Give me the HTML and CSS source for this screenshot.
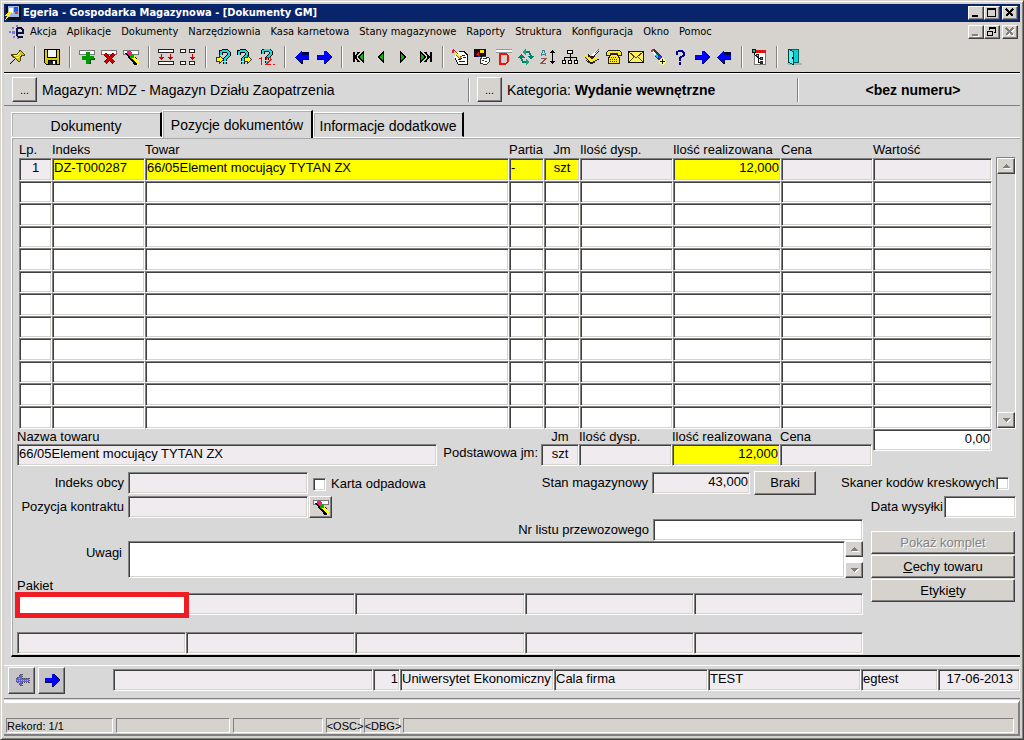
FILE: index.html
```html
<!DOCTYPE html>
<html lang="pl">
<head>
<meta charset="utf-8">
<title>Egeria - Gospodarka Magazynowa - [Dokumenty GM]</title>
<link rel="stylesheet" href="styles.css">
</head>
<body>
<svg class="defs" aria-hidden="true">
  <symbol id="pin" viewBox="0 0 16 16"><path d="M1 15l5-5" stroke="#000" /><path d="M2 6l2-1h4l2-2V1h1l4 4v1h-2l-2 3v3l-1 1-4-4z" fill="#d0c410" stroke="#4a4400"/><path d="M5 6h4l2-3M7 8h3l2-2" stroke="#ffff70" fill="none"/></symbol>
  <symbol id="save" viewBox="0 0 16 16"><path d="M0 0h16v16H2l-2-2z" fill="#000"/><path d="M1 1h2v8h10V1h2v14h-2v-4H4v4H2l-1-1z" fill="#d8cc00"/><path d="M4 1h8v7H4z" fill="#f4f4f4"/><path d="M5 12h7v4H5z" fill="#222"/><path d="M9 12h2v3H9z" fill="#fff"/></symbol>
  <symbol id="plus" viewBox="0 0 16 16"><path d="M.5 1.500h15v4H.5z" fill="#fff" stroke="#777"/><path d="M7 3h4v4h4v4h-4v4H7v-4H3V7h4z" fill="#009a00"/><path d="M10 14h1v-4h4v-1" stroke="#005000" fill="none"/></symbol>
  <symbol id="del" viewBox="0 0 16 16"><path d="M.5 1.500h15v4H.5z" fill="#fff" stroke="#777"/><path d="M4 5l9 9M13 5l-9 9" stroke="#500" stroke-width="4"/><path d="M4 5l9 9M13 5l-9 9" stroke="#d00000" stroke-width="2"/></symbol>
  <symbol id="erase" viewBox="0 0 16 16"><path d="M.5 1.500h15v4H.5z" fill="#fff" stroke="#777"/><path d="M3 4l10 12" stroke="#000" stroke-width="2"/><path d="M5 3l10 12" stroke="#000" stroke-width="5"/><path d="M10 8l6 7" stroke="#ffff20" stroke-width="3"/><path d="M5 2l3 4" stroke="#f02080" stroke-width="4"/><path d="M8 6l2 3" stroke="#00b000" stroke-width="4"/></symbol>
  <symbol id="rowsA" viewBox="0 0 16 16"><path d="M.5.500h15v3H.5zM.5 12.500h15v3H.5z" fill="#fff" stroke="#222"/><path d="M3 5h1v3h2v1H5v1H4v1H3v-1H2V9H1V8h2zM12 5h1v3h2v1h-1v1h-1v1h-1v-1h-1V9h-1V8h2z" fill="#e00000"/></symbol>
  <symbol id="rowsB" viewBox="0 0 16 16"><path d="M.5.500h5v3h-5zM9.500.500h5v3h-5zM.5 12.500h5v3h-5zM9.500 12.500h5v3h-5z" fill="#fff" stroke="#222"/><path d="M12 5h1v3h2v1h-1v1h-1v1h-1v-1h-1V9h-1V8h2z" fill="#e00000"/></symbol>
  <symbol id="hook" viewBox="0 0 16 16"><path d="M6 6V3l2-1h4l2 2v2l-4 4v2M10 13v2" stroke="#000" stroke-width="4" fill="none"/><path d="M6 6V3l2-1h4l2 2v2l-4 4v2M10 13v2" stroke="#20d8e0" stroke-width="2" fill="none"/></symbol>
  <symbol id="qin" viewBox="0 0 16 16"><use href="#hook"/><path d="M1.500 8.500h3v-2l4 4-4 4v-2h-3z" fill="#ff0" stroke="#333"/></symbol>
  <symbol id="qout" viewBox="0 0 16 16"><use href="#hook" x="-4"/><path d="M7.500 8.500h3v-2l4 4-4 4v-2h-3z" fill="#ff0" stroke="#333"/></symbol>
  <symbol id="qnum" viewBox="0 0 16 16"><use href="#hook" x="-2" y="-1"/><path d="M0 9.500h2M2.500 8v8M7 10.500l1-2h3l1 2-5 5h5M14 15.500h2" stroke="#f01010" fill="none"/></symbol>
  <symbol id="right" viewBox="0 0 16 16"><path d="M1 7h7V2h2l6 6-6 7H8v-4H1z" fill="#000040"/><path d="M1 6h7V2h1l6 6-6 6H8v-4H1z" fill="#00f"/></symbol>
  <symbol id="left" viewBox="0 0 16 16"><path d="M15 11H9v4H7L1 8l6-5h8z" fill="#000040"/><path d="M15 6H8V2H7L1 8l6 6h1v-4h7z" fill="#00f"/></symbol>
  <symbol id="leftOff" viewBox="0 0 16 16"><path d="M15 6H8V2H7L1 8l6 6h1v-4h7z" fill="#6464c8" stroke="#505060" stroke-dasharray="1 1"/><path d="M3 8h12M5 6h2M5 10h2" stroke="#a8a8d0" stroke-dasharray="1 1"/></symbol>
  <symbol id="first" viewBox="0 0 16 16"><path d="M2.500 3v10M8 3L4 8l4 5" stroke="#000" fill="none" stroke-width="2"/><path d="M12.500 3v10l-5-5z" fill="#0b0" stroke="#000"/></symbol>
  <symbol id="prev" viewBox="0 0 16 16"><path d="M10.500 3v10l-5-5z" fill="#0b0" stroke="#000"/></symbol>
  <symbol id="next" viewBox="0 0 16 16"><path d="M5.500 3v10l5-5z" fill="#0b0" stroke="#000"/></symbol>
  <symbol id="last" viewBox="0 0 16 16"><path d="M13.500 3v10M8 3l4 5-4 5" stroke="#000" fill="none" stroke-width="2"/><path d="M3.500 3v10l5-5z" fill="#0b0" stroke="#000"/></symbol>
  <symbol id="note" viewBox="0 0 16 16"><path d="M4.500 2.500h7l3 3v9h-9l-3-6z" fill="#fff"/><path d="M7 2.500h5l3 3v9.500H6l-3-6" fill="none" stroke="#111"/><path d="M10 6.500h3M11 8.500h3M6 10.500h3M7 12.500h6" stroke="#222"/><path d="M1 2l8 7" stroke="#806000" stroke-width="3"/><path d="M2 3l6 5" stroke="#ffe850" stroke-width="2"/><path d="M0 1l2 2" stroke="#e01050" stroke-width="3"/><path d="M9 9h1v1H9z" fill="#000"/></symbol>
  <symbol id="shapes" viewBox="0 0 16 16"><path d="M0 0h12v8H0z" fill="#111"/><path d="M1 6h4V2z" fill="#e01010"/><path d="M6 1h4v3H6z" fill="#ffe000"/><path d="M4 6h2v2H4z" fill="#1030e0"/><path d="M6 11l3-4 6 2v4l-3 3-3-1-3-1z" fill="#fff" stroke="#333"/><path d="M9 9.500h4M11 12.500h2M8 11.500h2" stroke="#333"/></symbol>
  <symbol id="dee" viewBox="0 0 16 16"><path d="M0 0h16v4H0z" fill="#fff"/><path d="M0 .500h16M0 3.500h16" stroke="#999"/><path d="M4 4.500h6l2 2v6l-2 2H4z" stroke="#f01010" stroke-width="2" fill="none"/></symbol>
  <symbol id="sync" viewBox="0 0 16 16"><path d="M6 3h5l2 4M10 13H5L3 9" stroke="#008070" stroke-width="2" fill="none"/><path d="M9 7h7l-3 4zM0 9h7L3 5z" fill="#008070"/><path d="M8 0v6L4 3zM8 10v6l4-3z" fill="#20a080"/></symbol>
  <symbol id="sort" viewBox="0 0 16 16"><path d="M1 7l2-6h1l2 6M2 5h3" stroke="#408090" fill="none"/><path d="M1 9.500h5l-5 5h5" stroke="#905050" fill="none"/><path d="M12 1h1v1h1v1h1v1h-2v8h2v1h-1v1h-1v1h-1v-1h-1v-1h-1v-1h2V4h-2V3h1V2h1z" fill="#000"/></symbol>
  <symbol id="tree" viewBox="0 0 16 16"><path d="M8 4v4M2 12V8h12v4M8 8v4" stroke="#000" fill="none"/><path d="M5.500 1.500h5v3h-5zM.5 11.500h3v3h-3zM6.500 11.500h3v3h-3zM12.500 11.500h3v3h-3z" fill="#fff" stroke="#000"/></symbol>
  <symbol id="sign" viewBox="0 0 16 16"><path d="M0 7l5-2 7 4 3 1-8 5z" fill="#ffe820"/><path d="M1 8l6 6 8-4M2 11l5 4 4-2" stroke="#222" fill="none"/><path d="M4 6l4 3 6-7" stroke="#222" stroke-width="2" fill="none"/><path d="M8 7l5-5" stroke="#fff" stroke-width="2"/><path d="M11 4l4-4" stroke="#e020a0"/></symbol>
  <symbol id="phone" viewBox="0 0 16 16"><path d="M2.500 1.500h11l2 2v3h-4v-2h-7v2h-4v-3zM4.500 5.500h7l2 4v5h-11v-5z" fill="#ffe820" stroke="#222"/><path d="M5 8.500h6M4 10.500h8M4 12.500h8" stroke="#333" stroke-dasharray="1 1"/></symbol>
  <symbol id="mail" viewBox="0 0 16 16"><path d="M.5 2.500h15v11H.5z" fill="#fff060" stroke="#111"/><path d="M1 3l7 6 7-6M1 13l5-5M15 13l-5-5" stroke="#554800" fill="none"/></symbol>
  <symbol id="torch" viewBox="0 0 16 16"><path d="M1 1l3-1 8 7 1 3-2 3-3-2-5-7z" fill="#333"/><path d="M1 3l2-2" stroke="#e03040" stroke-width="2"/><path d="M3 2l5 5-2 1-4-4z" fill="#f0f0f0"/><path d="M6 6l3 3" stroke="#20c8d8" stroke-width="2"/><path d="M9 7l2 3" stroke="#2040f0" stroke-width="3"/><path d="M11 9h3v1h1v1h1v3h-1v1h-1v1h-3v-1h-1v-1H9v-3h1v-1h1z" fill="#ffff60"/><path d="M12.500 10v5M10 12.500h5" stroke="#111"/></symbol>
  <symbol id="help" viewBox="0 0 16 16"><path d="M5 6V3l2-1h3l2 2v2L8 9v3M8 13v3" stroke="#000090" stroke-width="2" fill="none"/></symbol>
  <symbol id="struct" viewBox="0 0 16 16"><path d="M3.500 1.500h11v14h-11z" fill="#fff" stroke="#777"/><path d="M5 1h10v3H5z" fill="#e01010"/><path d="M3 2v3l4 4h2M7 6v7h2" stroke="#111" fill="none"/><path d="M1 0h4v4H1z" fill="#111"/><path d="M2 1h2v2H2z" fill="#0cc"/><path d="M5 5h3v3H5zM9 8h3v3H9zM9 12h3v3H9z" fill="#222"/><path d="M6 6h1v1H6z" fill="#ff0"/><path d="M10 9h1v1h-1z" fill="#0f0"/><path d="M10 13h1v1h-1z" fill="#f00"/></symbol>
  <symbol id="door" viewBox="0 0 16 16"><path d="M0 14h16v2H2z" fill="#b0b0b0"/><path d="M2.500.500h10v13h-10z" fill="#10d0d0" stroke="#006060"/><path d="M2.500.500l5 2v13l-5-2z" fill="#60f0f0" stroke="#004040"/><path d="M6 8h1v2H6z" fill="#000"/></symbol>
  <symbol id="app" viewBox="0 0 16 16"><path d="M1 0h13l2 2v13H3l-2-2z" fill="#111"/><path d="M3 1h11v11H3z" fill="#9bb8e8"/><path d="M4 3h4v5H4z" fill="#fff"/><path d="M9 2h4v5H9z" fill="#2858d0"/><path d="M10 6h3v3h-3z" fill="#e03030"/><path d="M3 7L0 11h2l-2 4 6-5H4l3-3z" fill="#ffe820"/></symbol>
  <symbol id="ego" viewBox="0 0 16 16"><g fill="#7878e8"><path d="M0 7h2v2H0zM3 3h2v2H3zM3 7h3v3H3zM4 12h2v2H4zM7 1h2v2H7zM8 13h2v2H8z"/></g><path d="M8 8.500h6V6l-2-2H9L7.500 6v5l2 2H14" fill="none" stroke="#101040" stroke-width="2"/></symbol>
</svg>

<div class="window">
  <header class="titlebar">
    <svg class="ico"><use href="#app"/></svg>
    <h1>Egeria - Gospodarka Magazynowa - [Dokumenty GM]</h1>
    <div class="winbtns">
      <button aria-label="Minimalizuj"><svg viewBox="0 0 12 10"><path d="M2 8h6" stroke="#000" stroke-width="2"/></svg></button>
      <button aria-label="Maksymalizuj"><svg viewBox="0 0 12 10"><path d="M1.500 1v7.500h8V1M1 1h9" fill="none" stroke="#000"/><path d="M1 1h9" stroke="#000" stroke-width="2"/></svg></button>
      <button class="apart" aria-label="Zamknij"><svg viewBox="0 0 12 10"><path d="M2 1l7 7M9 1L2 8" stroke="#000" stroke-width="2"/></svg></button>
    </div>
  </header>

  <nav class="menubar">
    <svg class="ico"><use href="#ego"/></svg>
    <button>Akcja</button><button>Aplikacje</button><button>Dokumenty</button><button>Narzędziownia</button><button>Kasa karnetowa</button><button>Stany magazynowe</button><button>Raporty</button><button>Struktura</button><button>Konfiguracja</button><button>Okno</button><button>Pomoc</button>
    <div class="winbtns">
      <button aria-label="Minimalizuj dokument"><svg viewBox="0 0 12 10"><path d="M3 9h6" stroke="#fff" stroke-width="2"/><path d="M2 8h6" stroke="#808080" stroke-width="2"/></svg></button>
      <button aria-label="Przywróć dokument"><svg viewBox="0 0 12 10"><path d="M3.500 3V.500h6v5H8M3 1h7M1.500 4.500h5v4h-5zM1 4h6" fill="none" stroke="#000"/></svg></button>
      <button class="apart" aria-label="Zamknij dokument" disabled><svg viewBox="0 0 12 10"><path d="M3 2l7 7M10 2L3 9" stroke="#fff" stroke-width="2"/><path d="M2 1l7 7M9 1L2 8" stroke="#808080" stroke-width="2"/></svg></button>
    </div>
  </nav>

  <div class="toolbar" role="toolbar" aria-label="Narzędzia">
    <button aria-label="Przypnij"><svg><use href="#pin"/></svg></button><i></i>
    <button aria-label="Zapisz"><svg><use href="#save"/></svg></button><i></i>
    <button aria-label="Dodaj"><svg><use href="#plus"/></svg></button>
    <button aria-label="Usuń"><svg><use href="#del"/></svg></button>
    <button aria-label="Wyczyść"><svg><use href="#erase"/></svg></button><i></i>
    <button aria-label="Powiel rekord"><svg><use href="#rowsA"/></svg></button>
    <button aria-label="Powiel pole"><svg><use href="#rowsB"/></svg></button><i></i>
    <button aria-label="Wprowadź zapytanie"><svg><use href="#qin"/></svg></button>
    <button aria-label="Wykonaj zapytanie"><svg><use href="#qout"/></svg></button>
    <button aria-label="Policz"><svg><use href="#qnum"/></svg></button><i></i>
    <button aria-label="Poprzedni blok"><svg><use href="#left"/></svg></button>
    <button aria-label="Następny blok"><svg><use href="#right"/></svg></button><i></i>
    <button aria-label="Pierwszy"><svg><use href="#first"/></svg></button>
    <button aria-label="Poprzedni"><svg><use href="#prev"/></svg></button>
    <button aria-label="Następny"><svg><use href="#next"/></svg></button>
    <button aria-label="Ostatni"><svg><use href="#last"/></svg></button><i></i>
    <button aria-label="Edycja"><svg><use href="#note"/></svg></button>
    <button aria-label="Lista"><svg><use href="#shapes"/></svg></button>
    <button aria-label="Dokument"><svg><use href="#dee"/></svg></button>
    <button aria-label="Odśwież"><svg><use href="#sync"/></svg></button>
    <button aria-label="Sortuj"><svg><use href="#sort"/></svg></button>
    <button aria-label="Drzewo"><svg><use href="#tree"/></svg></button>
    <button aria-label="Podpis"><svg><use href="#sign"/></svg></button>
    <button aria-label="Telefon"><svg><use href="#phone"/></svg></button>
    <button aria-label="Poczta"><svg><use href="#mail"/></svg></button>
    <button aria-label="Szukaj"><svg><use href="#torch"/></svg></button>
    <button aria-label="Pomoc kontekstowa"><svg><use href="#help"/></svg></button>
    <button aria-label="Dalej"><svg><use href="#right"/></svg></button>
    <button aria-label="Wstecz"><svg><use href="#left"/></svg></button><i></i>
    <button aria-label="Struktura"><svg><use href="#struct"/></svg></button><i></i>
    <button aria-label="Wyjście"><svg><use href="#door"/></svg></button>
  </div>

  <main class="work">
    <div class="context">
      <div><button class="btn dots" aria-label="Wybierz magazyn">...</button><span>Magazyn: MDZ - Magazyn Działu Zaopatrzenia</span></div>
      <div><button class="btn dots" aria-label="Wybierz kategorię">...</button><span>Kategoria: <b>Wydanie wewnętrzne</b></span></div>
      <div class="center"><b>&lt;bez numeru&gt;</b></div>
    </div>

    <div class="tabs" role="tablist">
      <button role="tab" aria-selected="false">Dokumenty</button>
      <button role="tab" aria-selected="true">Pozycje dokumentów</button>
      <button role="tab" aria-selected="false">Informacje dodatkowe</button>
    </div>

    <section class="panel">
      <div class="listing">
        <table class="items">
          <colgroup><col class="w-lp"><col class="w-idx"><col><col class="w-par"><col class="w-jm"><col class="w-qty"><col class="w-real"><col class="w-price"><col class="w-val"></colgroup>
          <thead><tr><th>Lp.</th><th>Indeks</th><th>Towar</th><th>Partia</th><th class="center">Jm</th><th>Ilość dysp.</th><th>Ilość realizowana</th><th>Cena</th><th>Wartość</th></tr></thead>
          <tbody>
            <tr><td class="center ro">1</td><td class="hot">DZ-T000287</td><td class="hot">66/05Element mocujący TYTAN ZX</td><td class="hot">-</td><td class="hot center">szt</td><td class="ro"></td><td class="hot num">12,000</td><td class="ro"></td><td class="ro"></td></tr>
            <tr><td></td><td></td><td></td><td></td><td></td><td></td><td></td><td></td><td></td></tr>
            <tr><td></td><td></td><td></td><td></td><td></td><td></td><td></td><td></td><td></td></tr>
            <tr><td></td><td></td><td></td><td></td><td></td><td></td><td></td><td></td><td></td></tr>
            <tr><td></td><td></td><td></td><td></td><td></td><td></td><td></td><td></td><td></td></tr>
            <tr><td></td><td></td><td></td><td></td><td></td><td></td><td></td><td></td><td></td></tr>
            <tr><td></td><td></td><td></td><td></td><td></td><td></td><td></td><td></td><td></td></tr>
            <tr><td></td><td></td><td></td><td></td><td></td><td></td><td></td><td></td><td></td></tr>
            <tr><td></td><td></td><td></td><td></td><td></td><td></td><td></td><td></td><td></td></tr>
            <tr><td></td><td></td><td></td><td></td><td></td><td></td><td></td><td></td><td></td></tr>
            <tr><td></td><td></td><td></td><td></td><td></td><td></td><td></td><td></td><td></td></tr>
            <tr><td></td><td></td><td></td><td></td><td></td><td></td><td></td><td></td><td></td></tr>
          </tbody>
        </table>
        <div class="scroll">
          <button class="btn" aria-label="W górę"><svg viewBox="0 0 9 5"><path d="M1 5h8L5 1z" fill="#fff"/><path d="M0 4h8L4 0z" fill="#808080"/></svg></button>
          <button class="btn" aria-label="W dół"><svg viewBox="0 0 9 5"><path d="M1 1h8L5 5z" fill="#fff"/><path d="M0 0h8L4 4z" fill="#808080"/></svg></button>
        </div>
      </div>

      <div class="row totals">
        <div class="stack grow"><label for="name">Nazwa towaru</label><input id="name" class="field ro" value="66/05Element mocujący TYTAN ZX" readonly></div>
        <span class="base">Podstawowa jm:</span>
        <div class="stack s-jm"><label for="bjm">Jm</label><input id="bjm" class="field ro center" value="szt" readonly></div>
        <div class="stack w-qty"><label for="bq">Ilość dysp.</label><input id="bq" class="field ro" readonly></div>
        <div class="stack w-real"><label for="br">Ilość realizowana</label><input id="br" class="field hot num" value="12,000"></div>
        <div class="stack w-price"><label for="bp">Cena</label><input id="bp" class="field ro" readonly></div>
        <input class="field num sum" aria-label="Wartość razem" value="0,00">
      </div>

      <div class="row second">
        <label class="lead" for="obcy">Indeks obcy</label><input id="obcy" class="field ro mid" readonly>
        <label class="check karta"><input type="checkbox">Karta odpadowa</label>
        <label class="stan" for="stan">Stan magazynowy</label><input id="stan" class="field ro num short" value="43,000" readonly>
        <button class="btn braki">Braki</button>
        <label class="check skaner">Skaner kodów kreskowych<input type="checkbox"></label>
      </div>
      <div class="row third">
        <label class="lead" for="kontrakt">Pozycja kontraktu</label><input id="kontrakt" class="field ro mid" readonly><button class="btn clear" aria-label="Wyczyść kontrakt"><svg><use href="#erase"/></svg></button>
        <label class="data" for="data">Data wysyłki</label><input id="data" class="field date">
      </div>

      <div class="row lower">
        <div class="grow">
          <div class="row letter"><label for="list">Nr listu przewozowego</label><input id="list" class="field"></div>
          <div class="row notes"><label class="lead" for="uwagi">Uwagi</label><textarea id="uwagi" class="field"></textarea>
            <div class="scroll mini">
              <button class="btn" aria-label="Uwagi w górę"><svg viewBox="0 0 9 5"><path d="M1 5h8L5 1z" fill="#fff"/><path d="M0 4h8L4 0z" fill="#808080"/></svg></button>
              <button class="btn" aria-label="Uwagi w dół"><svg viewBox="0 0 9 5"><path d="M1 1h8L5 5z" fill="#fff"/><path d="M0 0h8L4 4z" fill="#808080"/></svg></button>
            </div>
          </div>
          <label class="pakiet" for="p1">Pakiet</label>
          <div class="packs">
            <div class="marked"><input id="p1" class="field"></div><input class="field ro" aria-label="Pakiet 2" readonly><input class="field ro" aria-label="Pakiet 3" readonly><input class="field ro" aria-label="Pakiet 4" readonly><input class="field ro" aria-label="Pakiet 5" readonly>
            <input class="field ro" aria-label="Pakiet 6" readonly><input class="field ro" aria-label="Pakiet 7" readonly><input class="field ro" aria-label="Pakiet 8" readonly><input class="field ro" aria-label="Pakiet 9" readonly><input class="field ro" aria-label="Pakiet 10" readonly>
          </div>
        </div>
        <div class="actions">
          <button class="btn" disabled>Pokaż komplet</button>
          <button class="btn"><u>C</u>echy towaru</button>
          <button class="btn">Etyki<u>e</u>ty</button>
        </div>
      </div>
    </section>

    <div class="navbar">
      <button class="btn nav" aria-label="Poprzednia strona" disabled><svg><use href="#leftOff"/></svg></button>
      <button class="btn nav" aria-label="Następna strona"><svg><use href="#right"/></svg></button>
      <div class="infos">
        <input class="field ro" aria-label="Komunikat" readonly><input class="field ro num" aria-label="Numer" value="1" readonly><input class="field ro" aria-label="Jednostka" value="Uniwersytet Ekonomiczny" readonly><input class="field ro" aria-label="Firma" value="Cala firma" readonly><input class="field ro" aria-label="Baza" value="TEST" readonly><input class="field ro" aria-label="Użytkownik" value="egtest" readonly><input class="field ro num" aria-label="Data bieżąca" value="17-06-2013" readonly>
      </div>
    </div>
  </main>

  <footer class="status"><span>Rekord: 1/1</span><span></span><span></span><span>&lt;OSC&gt;</span><span>&lt;DBG&gt;</span><span></span></footer>
</div>
</body>
</html>
```
FILE: styles.css
```css
* { box-sizing: border-box; }
body { margin: 0; background: #d6d3ce; color: #000; font: 13px/16px "Liberation Sans", Arial, sans-serif; }
button, input, textarea { font: inherit; color: inherit; margin: 0; border-radius: 0; }
button { padding: 0; border: 0; background: none; white-space: nowrap; }
svg { width: 16px; height: 16px; display: block; flex: none; shape-rendering: crispEdges; }
.defs { position: absolute; width: 0; height: 0; }
.center { text-align: center; }
.grow { flex: 1; min-width: 0; }

.window {
  min-height: 100vh; display: flex; flex-direction: column; padding: 3px 3px 2px;
  border: 1px solid; border-color: #d6d3ce #404040 #404040 #d6d3ce;
  box-shadow: inset 1px 1px #fff, inset -1px -1px #808080;
}

.titlebar { display: flex; align-items: center; gap: 2px; height: 18px; padding: 0 2px 0 1px; background: #08246b; color: #fff; }
.titlebar h1 { flex: 1; margin: 0; font: bold 11px/16px "DejaVu Sans Condensed", "DejaVu Sans", sans-serif; }
.winbtns { display: flex; margin-left: auto; }
.winbtns button {
  width: 16px; height: 14px; display: flex; align-items: center; justify-content: center; background: #d6d3ce;
  border: 1px solid; border-color: #fff #404040 #404040 #fff; box-shadow: inset -1px -1px #808080;
}
.winbtns svg { width: 12px; height: 10px; }
.winbtns .apart { margin-left: 2px; }

.menubar { display: flex; align-items: center; gap: 10px; height: 20px; padding: 0 2px 0 5px; font: 11px/16px "DejaVu Sans Condensed", "DejaVu Sans", sans-serif; }
.menubar .ico { margin-right: -5px; }

.toolbar { display: flex; align-items: center; height: 31px; padding-left: 2px; border-bottom: 1px solid #000; }
.toolbar button { width: 22px; height: 22px; display: grid; place-items: center; }
.toolbar i { width: 2px; height: 22px; margin: 0 5px 0 6px; background: linear-gradient(90deg, #808080 50%, #fff 50%); }

.work { background: #d8d8d8; }
.context { display: grid; grid-template-columns: 464fr 329fr 223fr; height: 33px; align-items: center; border-top: 1px solid #fff; border-bottom: 1px solid #808080; font-size: 14px; }
.context > div { display: flex; align-items: center; gap: 5px; height: 24px; padding-left: 8px; }
.context > div + div { border-left: 1px solid #808080; box-shadow: inset 1px 0 #fff; }
.context .center { justify-content: center; padding: 0 0 0 8px; }

.btn {
  background: #d6d3ce; border: 1px solid; border-color: #fff #404040 #404040 #fff;
  box-shadow: inset -1px -1px #808080; text-align: center;
}
.btn:disabled { color: #848284; text-shadow: 1px 1px #fff; }
.dots { width: 25px; height: 25px; font-size: 11px; }

.field, .items td {
  background: #fff; border: 1px solid; border-color: #808080 #fff #fff #808080;
  box-shadow: inset 1px 1px #404040, inset -1px -1px #d6d3ce;
  padding: 0 1px 3px; height: 22px; font-size: 13px; min-width: 0; outline: 0;
}
.ro, .items .ro { background: #efebef; }
.hot, .items .hot { background: #ff0; }
.num, .items .num { text-align: right; }

.tabs { display: flex; align-items: flex-end; height: 31px; padding-left: 7px; font-size: 14px; }
.tabs button { width: 151px; height: 25px; padding-top: 2px; border: 1px solid; border-color: #fff #000 transparent #fff; border-right-width: 2px; box-shadow: inset 1px 1px #b0b0b0; }
.tabs [aria-selected="true"] { height: 28px; margin-bottom: -1px; padding-bottom: 1px; background: #d8d8d8; border-bottom: 0; z-index: 1; }

.panel { margin-left: 7px; padding: 3px 4px 1px 5px; border: 1px solid #fff; border-right: 0; border-bottom: 2px solid #000; box-shadow: inset 1px 1px #a8a8a8; }
.listing { display: flex; gap: 4px; padding-left: 2px; }
.items { flex: 1; table-layout: fixed; width: 100%; border-spacing: 0; }
.items th { height: 17px; padding: 0; font-weight: normal; text-align: left; line-height: 16px; white-space: nowrap; }
.items th.center, .items td.center { text-align: center; }
.items tbody tr:nth-child(odd) td, .items tbody tr:last-child td { height: 23px; }
.w-lp { width: 33px; } .w-idx { width: 93px; } .w-par { width: 35px; } .w-jm { width: 36px; }
.w-qty { width: 93px; } .w-real { width: 108px; } .w-price { width: 92px; } .w-val { width: 119px; }
.scroll { display: flex; flex-direction: column; justify-content: space-between; width: 20px; margin-top: 16px; border: 1px solid; border-color: #808080 #fff #fff #808080; }
.scroll .btn { height: 16px; display: grid; place-items: center; }
.scroll svg { width: 9px; height: 5px; }

.row { display: flex; }
.stack { display: flex; flex-direction: column; }
.stack label { height: 15px; line-height: 15px; white-space: nowrap; }
.totals { padding-right: 24px; }
.base { padding: 16px 3px 0 6px; }
.s-jm { width: 38px; }
.s-jm label { text-align: center; }
.sum { width: 119px; margin-left: 1px; }

.second, .third { align-items: center; height: 24px; }
.second { margin-top: 5px; }
.lead { width: 111px; padding-right: 4px; text-align: right; white-space: nowrap; flex: none; }
.mid { width: 180px; }
.check { display: flex; align-items: center; gap: 5px; white-space: nowrap; }
.check input {
  appearance: none; width: 13px; height: 13px; background: #fff;
  border: 1px solid; border-color: #808080 #fff #fff #808080; box-shadow: inset 1px 1px #404040, inset -1px -1px #d6d3ce;
}
.karta { padding: 2px 0 0 5px; }
.stan { margin-left: auto; padding-right: 4px; }
.short { width: 98px; }
.braki { width: 62px; height: 24px; margin: 0 25px 0 4px; }
.skaner { gap: 1px; padding-right: 7px; }
.clear { width: 23px; height: 22px; margin-left: 1px; display: grid; place-items: center; }
.data { margin-left: auto; padding-right: 1px; }
.date { width: 72px; }

.lower { gap: 8px; padding-right: 1px; }
.letter { justify-content: flex-end; align-items: center; gap: 4px; }
.letter .field { width: 210px; }
.notes .lead { padding: 4px 6px 0 0; }
.notes textarea { flex: 1; height: 37px; resize: none; overflow: hidden; }
.mini { margin: 0; width: 18px; border: 0; background: #fff; }
.pakiet { display: block; height: 15px; }
.packs { display: grid; grid-template-columns: repeat(5, 1fr); row-gap: 17px; }
.packs .field { width: 100%; }
.marked { position: relative; height: 22px; }
.marked::after { content: ""; position: absolute; inset: -1px -3px -3px -2px; border: 5px solid #ef1c24; pointer-events: none; }
.actions { width: 144px; padding-top: 12px; }
.actions .btn { display: block; width: 100%; height: 23px; margin-bottom: 1px; }

.navbar { display: flex; align-items: center; height: 34px; margin-top: 8px; padding-left: 4px; gap: 3px; border-top: 1px solid #fff; border-bottom: 1px solid #808080; }
.nav { width: 27px; height: 27px; display: grid; place-items: center; margin-bottom: 4px; background: #c6c3c6; }
.infos { flex: 1; min-width: 0; display: grid; grid-template-columns: 260fr 27fr 154fr 154fr 153fr 77fr 82fr; padding: 0 0 4px 45px; }
.infos .field { width: 100%; }
.infos .num:last-child { padding-right: 6px; }

.status { display: grid; grid-template-columns: 107fr 114fr 90fr 35fr 36fr 612fr; gap: 3px; margin-top: 1px; padding: 15px 4px 1px 2px; border-top: 3px solid #fff; border-bottom: 2px solid #808080; border-right: 2px solid #808080; font-size: 11px; }
.status span { height: 15px; min-width: 0; line-height: 14px; border: 1px solid; border-color: #808080 #fff #fff #808080; white-space: nowrap; }
```
